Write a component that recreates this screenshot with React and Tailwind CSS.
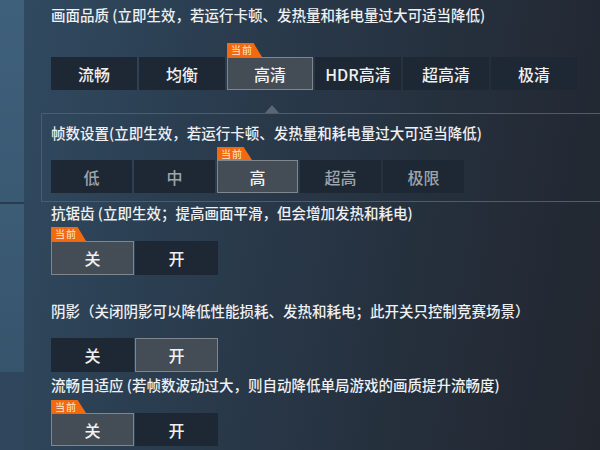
import React from 'react';

const Tag = () => (
  <div className="h-full w-[35px] bg-[#f26a10] text-[10px] leading-[13px] text-[#ffe9d6] pl-[4px] tracking-[1px] [clip-path:polygon(0_0,76%_0,100%_100%,0_100%)]">
    当前
  </div>
);

const Option = ({ label, active, w, h, dim }) => (
  <div
    className={`flex items-center justify-center ${w} ${h} text-[16px] font-medium ${
      active
        ? 'bg-[#444c56] border border-[#80868e] text-[#f2f2f2]'
        : `bg-[#1e2834] ${dim ? 'text-[#9ea4ab]' : 'text-[#f0f0f0]'}`
    }`}
  >
    {label}
  </div>
);

const OptionRow = ({ options, current, w, h, gap, dim, tagH }) => (
  <div>
    <div className={`flex ${gap} ${tagH}`}>
      {options.map((o) => (
        <div key={o} className={`${w} h-full`}>
          {o === current && <Tag />}
        </div>
      ))}
    </div>
    <div className={`flex ${gap}`}>
      {options.map((o) => (
        <Option key={o} label={o} active={o === current} w={w} h={h} dim={dim} />
      ))}
    </div>
  </div>
);

const Title = ({ children }) => (
  <div className="h-[20px] leading-[20px] text-[14.5px] font-medium text-[#eef0f2] whitespace-nowrap">{children}</div>
);

export default function App() {
  return (
    <div
      className="w-[600px] h-[450px] overflow-hidden flex bg-[linear-gradient(100deg,#314b62_0%,#2a3c4e_35%,#252f3c_70%,#22262f_100%)]"
      style={{ fontFamily: '"Noto Sans CJK SC", "Noto Sans", sans-serif' }}
    >
      {/* left strip */}
      <div className="w-[24px] flex flex-col shrink-0">
        <div className="h-[202px] bg-[linear-gradient(180deg,#3f607b,#3a5973)]" />
        <div className="h-[2px] bg-[#2a3c4e]" />
        <div className="h-[168px] bg-[linear-gradient(180deg,#3c5b75,#37546d)]" />
        <div className="flex-1 bg-[#30465c]" />
      </div>

      <div className="flex-1 flex flex-col">
        {/* 画面品质 */}
        <div className="pl-[27px] pt-[5px]">
          <Title>画面品质 (立即生效，若运行卡顿、发热量和耗电量过大可适当降低)</Title>
          <div className="mt-[18px]">
            <OptionRow
              options={['流畅', '均衡', '高清', 'HDR高清', '超高清', '极清']}
              current="高清"
              w="w-[86px]"
              h="h-[33px]"
              gap="gap-[2px]"
              tagH="h-[14px]"
            />
          </div>
        </div>

        {/* 帧数设置 */}
        <div className="relative mt-[23px] ml-[17px] border-y border-l border-[#4d5d6d] pl-[9px] pt-[9px] pb-[8px]">
          <div className="absolute left-[223px] -top-[9px] w-0 h-0 border-x-[7px] border-x-transparent border-b-[8px] border-b-[#5b6672]" />
          <Title>帧数设置(立即生效，若运行卡顿、发热量和耗电量过大可适当降低)</Title>
          <div className="mt-[4px]">
            <OptionRow
              options={['低', '中', '高', '超高', '极限']}
              current="高"
              w="w-[81px]"
              h="h-[33px]"
              gap="gap-[2px]"
              tagH="h-[13px]"
              dim
            />
          </div>
        </div>

        {/* 抗锯齿 */}
        <div className="pl-[27px] pt-[1px]">
          <Title>抗锯齿 (立即生效；提高画面平滑，但会增加发热和耗电)</Title>
          <div className="mt-[4px]">
            <OptionRow options={['关', '开']} current="关" w="w-[83px]" h="h-[34px]" gap="gap-[1px]" tagH="h-[14px]" />
          </div>
        </div>

        {/* 阴影 */}
        <div className="pl-[27px] pt-[26px]">
          <Title>阴影（关闭阴影可以降低性能损耗、发热和耗电；此开关只控制竞赛场景）</Title>
          <div className="mt-[17px]">
            <OptionRow options={['关', '开']} current="开" w="w-[83px]" h="h-[34px]" gap="gap-[1px]" tagH="h-0" />
          </div>
        </div>

        {/* 流畅自适应 */}
        <div className="pl-[27px] pt-[3px]">
          <Title>流畅自适应 (若帧数波动过大，则自动降低单局游戏的画质提升流畅度)</Title>
          <div className="mt-[5px]">
            <OptionRow options={['关', '开']} current="关" w="w-[83px]" h="h-[33px]" gap="gap-[1px]" tagH="h-[13px]" />
          </div>
        </div>
      </div>
    </div>
  );
}
